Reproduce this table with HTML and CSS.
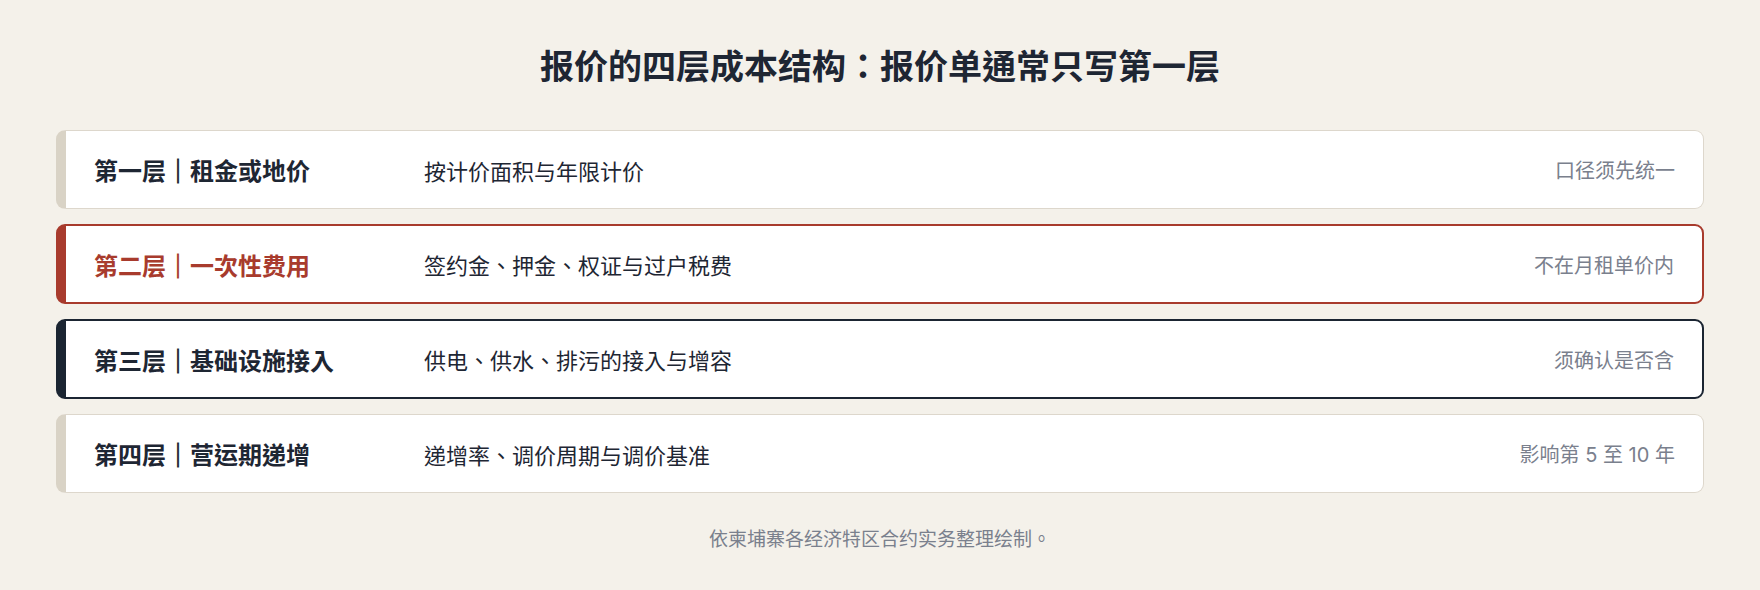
FILE: index.html
```html
<!DOCTYPE html>
<html>
    <head>
        <meta charset="UTF-8" />
        <meta name="viewport" content="width=device-width, initial-scale=1.0" />
        <title>报价的四层成本结构</title>
        <link rel="stylesheet" href="styles.css" />
    </head>

    <body>
        <div class="page">
            <h1 class="title">报价的四层成本结构：报价单通常只写第一层</h1>

            <div class="layers">
                <div class="layer">
                    <div class="layer-name">第一层<span class="bar">｜</span>租金或地价</div>
                    <div class="layer-desc">按计价面积与年限计价</div>
                    <div class="layer-note">口径须先统一</div>
                </div>
                <div class="layer layer-red">
                    <div class="layer-name">第二层<span class="bar">｜</span>一次性费用</div>
                    <div class="layer-desc">签约金、押金、权证与过户税费</div>
                    <div class="layer-note">不在月租单价内</div>
                </div>
                <div class="layer layer-dark">
                    <div class="layer-name">第三层<span class="bar">｜</span>基础设施接入</div>
                    <div class="layer-desc">供电、供水、排污的接入与增容</div>
                    <div class="layer-note">须确认是否含</div>
                </div>
                <div class="layer">
                    <div class="layer-name">第四层<span class="bar">｜</span>营运期递增</div>
                    <div class="layer-desc">递增率、调价周期与调价基准</div>
                    <div class="layer-note">影响第 5 至 10 年</div>
                </div>
            </div>

            <p class="source">依柬埔寨各经济特区合约实务整理绘制。</p>
        </div>
    </body>
</html>
```

FILE: styles.css
```css
body {
    margin: 0px;
    background-color: #f4f1ea;
    font-family: Inter, "Noto Sans CJK TC", sans-serif;
    color: #1e2633;
}

.page {
    padding: 44px 56px 0px 56px;
}

.title {
    margin: 0px 0px 40px 0px;
    font-size: 34px;
    line-height: 46px;
    font-weight: 700;
    text-align: center;
    color: #1e2633;
}

.layers {
    display: flex;
    flex-direction: column;
    gap: 15px;
}

.layer {
    display: grid;
    grid-template-columns: 330px 1fr auto;
    align-items: center;
    height: 77px;
    padding: 0px 28px;
    background-color: #ffffff;
    border: 1px solid #ddd7cc;
    border-left: 10px solid #d9d3c6;
    border-radius: 9px;
}

.layer-red {
    height: 76px;
    border: 2px solid #a83b2d;
    border-left: 10px solid #a83b2d;
}

.layer-dark {
    height: 76px;
    border: 2px solid #1b2532;
    border-left: 10px solid #1b2532;
}

.layer-name {
    font-size: 24px;
    font-weight: 700;
}

/* the full-width bar renders hairline thin, thicken it a bit */
.layer-name .bar {
    -webkit-text-stroke: 0.8px currentColor;
}

.layer-red .layer-name {
    color: #a83b2d;
}

.layer-desc {
    font-size: 22px;
    color: #1e2633;
}

.layer-note {
    font-size: 20px;
    color: #7a808d;
}

.source {
    margin: 33px 0px 0px 0px;
    font-size: 19px;
    line-height: 28px;
    text-align: center;
    color: #7a808d;
}
```
